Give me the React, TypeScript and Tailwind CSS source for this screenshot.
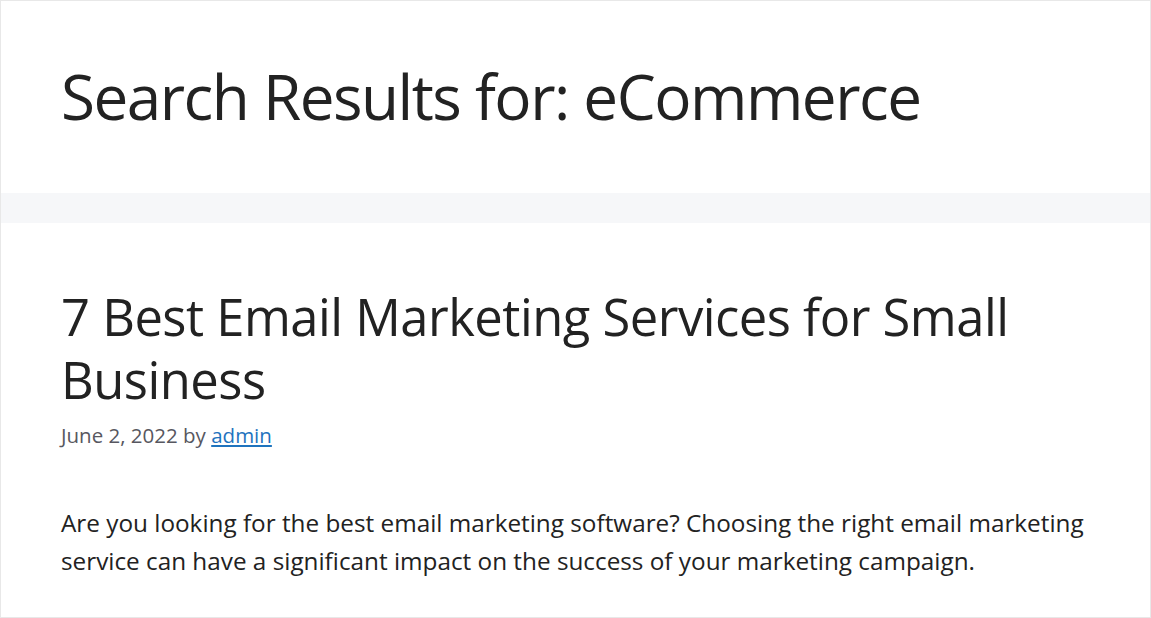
export default function App() {
  return (
    <div className="flex h-[618px] w-[1151px] flex-col border border-[#e8e8e8] bg-white font-['Open_Sans',sans-serif] text-[#222222]">
      {/* Page header */}
      <header className="h-[192px] px-[60px] pt-[55px]">
        <h1 className="text-[62px] leading-[80px] font-normal tracking-[-1.5px]">Search Results for: eCommerce</h1>
      </header>

      {/* Separator band */}
      <div className="h-[30px] shrink-0 bg-[#f6f7f9]" />

      {/* Article */}
      <article className="flex-1 px-[60px] pt-[62px]">
        <h2 className="text-[50.7px] leading-[63px] font-normal tracking-[-0.5px]">
          7 Best Email Marketing Services for Small Business
        </h2>
        <div className="mt-[9px] text-[20.5px] leading-[30px] text-[#575760]">
          June 2, 2022 by{' '}
          <a href="#" className="text-[#1e73be] underline">
            admin
          </a>
        </div>
        <p className="mt-[54px] text-[24.3px] leading-[38px]">
          Are you looking for the best email marketing software? Choosing the right email marketing service can have a
          significant impact on the success of your marketing campaign.
        </p>
      </article>
    </div>
  )
}
